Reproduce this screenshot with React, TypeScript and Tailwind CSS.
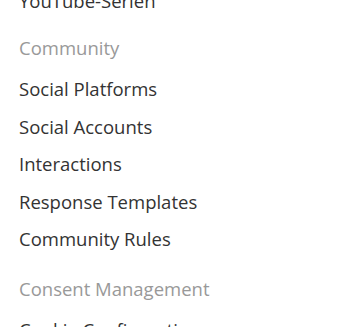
import React from "react";

const sections = [
  {
    title: "Community",
    gap: "mt-[9.5px]",
    items: [
      "Social Platforms",
      "Social Accounts",
      "Interactions",
      "Response Templates",
      "Community Rules",
    ],
  },
  {
    title: "Consent Management",
    gap: "mt-3",
    items: ["Cookie Configuration"],
  },
];

const Chevron = () => (
  <span className="absolute right-[-10px] top-1/2 h-[11px] w-[11px] -translate-y-1/2">
    <svg viewBox="0 0 12 12" className="h-full w-full" fill="none" stroke="#c8c8c8" strokeWidth="1">
      <path d="M2 7.5 6 4l4 3.5" />
    </svg>
  </span>
);

export default function App() {
  return (
    <div
      className="h-[327px] w-[350px] overflow-hidden bg-white"
      style={{ fontFamily: '"Open Sans", "Noto Sans", sans-serif' }}
    >
      <nav className="-mt-[18.25px] flex flex-col">
        <a className="flex h-[37.5px] items-center pl-[19px] text-[18.5px] text-[#333]">
          YouTube-Serien
        </a>
        {sections.map((s) => (
          <div key={s.title} className="flex flex-col">
            <div
              className={`relative ${s.gap} mb-1 flex h-[37.5px] items-center pl-[19px] text-[18.5px] text-[#999]`}
            >
              {s.title}
              <Chevron />
            </div>
            {s.items.map((it) => (
              <a
                key={it}
                className="flex h-[37.5px] items-center pl-[19px] text-[18.5px] text-[#333]"
              >
                {it}
              </a>
            ))}
          </div>
        ))}
      </nav>
    </div>
  );
}
